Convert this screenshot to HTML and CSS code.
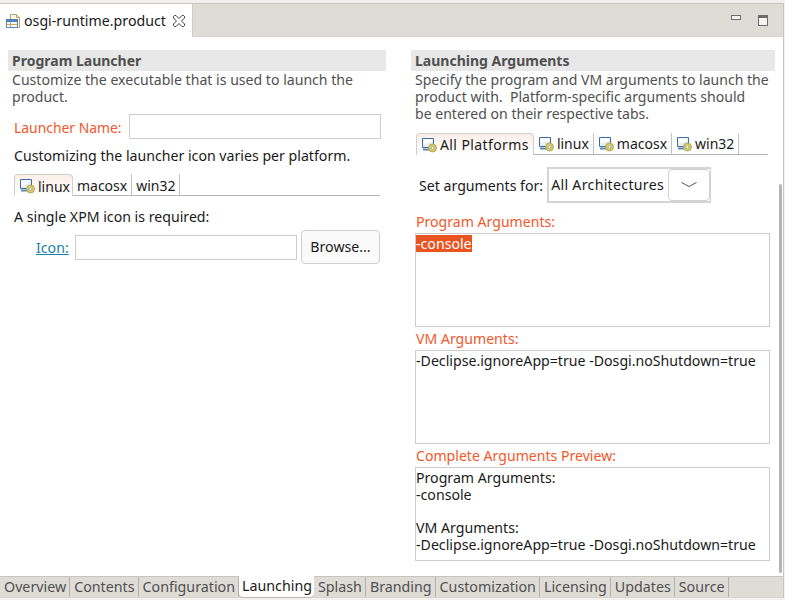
FILE: index.html
```html
<!DOCTYPE html>
<html lang="en">
<head>
<meta charset="utf-8">
<title>osgi-runtime.product</title>
<link rel="stylesheet" href="styles.css">
</head>
<body>
<div class="frame">
  <div class="editor-tabs">
    <div class="editor-tab">
      <svg class="file-icon" width="16" height="16" viewBox="0 0 16 16"><path d="M5.500 1.500h6l3 3v10h-9z" fill="#fbf6e6" stroke="#b9a670"/><path d="M11.500 1.500v3h3" fill="#efe3bd" stroke="#b9a670"/><path d="M1.500 6.500h11v8h-11z" fill="#f4f7fb" stroke="#5f86b5"/><path d="M1.500 6.500h11v2h-11z" fill="#5f8fc9" stroke="#4a76ad"/><path d="M2 11.500h10M5.500 9v5" stroke="#c9a65c" fill="none"/></svg>
      <span>osgi-runtime.product</span>
      <svg class="close-icon" width="12" height="12" viewBox="0 0 12 12"><path d="M.5 1.500l1-1h1.500L6 3.500 9 .5h1.500l1 1V3L8.500 6l3 3v1.500l-1 1H9L6 8.500l-3 3H1.500l-1-1V9l3-3-3-3z" fill="#fff" stroke="#3c3c3c"/></svg>
    </div>
    <div class="editor-tools">
      <span class="min-btn"></span>
      <span class="max-btn"></span>
    </div>
  </div>

  <div class="content">
    <section class="col col-left">
      <h2 class="sec-title">Program Launcher</h2>
      <p class="sec-desc">Customize the executable that is used to launch the product.</p>
      <div class="name-row">
        <label class="req name-label">Launcher Name:</label>
        <div class="field name-field"></div>
      </div>
      <p class="plain hint">Customizing the launcher icon varies per platform.</p>
      <div class="tabs tabs-left">
        <div class="tab on"><svg class="pc" width="16" height="16" viewBox="0 0 16 16"><use href="#pc"/></svg><span>linux</span></div>
        <div class="tab"><span>macosx</span></div>
        <div class="tab"><span>win32</span></div>
      </div>
      <p class="plain xpm">A single XPM icon is required:</p>
      <div class="icon-row">
        <a class="link">Icon:</a>
        <div class="field icon-field"></div>
        <div class="btn">Browse...</div>
      </div>
    </section>

    <section class="col col-right">
      <h2 class="sec-title">Launching Arguments</h2>
      <p class="sec-desc desc-narrow">Specify the program and VM arguments to launch the product with.&nbsp; Platform-specific arguments should be&nbsp;entered on their respective tabs.</p>
      <div class="tabs tabs-right">
        <div class="tab on"><svg class="pc" width="16" height="16" viewBox="0 0 16 16"><use href="#pc"/></svg><span class="wide">All Platforms</span></div>
        <div class="tab"><svg class="pc" width="16" height="16" viewBox="0 0 16 16"><use href="#pc"/></svg><span>linux</span></div>
        <div class="tab"><svg class="pc" width="16" height="16" viewBox="0 0 16 16"><use href="#pc"/></svg><span>macosx</span></div>
        <div class="tab"><svg class="pc" width="16" height="16" viewBox="0 0 16 16"><use href="#pc"/></svg><span>win32</span></div>
      </div>
      <div class="arch-row">
        <span class="plain">Set arguments for:</span>
        <div class="combo">
          <span class="combo-text">All Architectures</span>
          <span class="combo-btn"><svg width="18" height="6" viewBox="0 0 18 6"><path d="M1.500.5 9 4.500 16.500.5" fill="none" stroke="#555"/></svg></span>
        </div>
      </div>
      <label class="req arg-label first">Program Arguments:</label>
      <div class="area"><span class="sel">-console</span></div>
      <label class="req arg-label">VM Arguments:</label>
      <div class="area">-Declipse.ignoreApp=true -Dosgi.noShutdown=true</div>
      <label class="req arg-label">Complete Arguments Preview:</label>
      <div class="area preview">Program Arguments:<br>-console<br><br>VM Arguments:<br>-Declipse.ignoreApp=true -Dosgi.noShutdown=true</div>
    </section>
    <div class="scrollbar"></div>
  </div>

  <div class="page-tabs">
    <div class="page-tab">Overview</div>
    <div class="page-tab">Contents</div>
    <div class="page-tab">Configuration</div>
    <div class="page-tab on">Launching</div>
    <div class="page-tab">Splash</div>
    <div class="page-tab">Branding</div>
    <div class="page-tab">Customization</div>
    <div class="page-tab">Licensing</div>
    <div class="page-tab">Updates</div>
    <div class="page-tab">Source</div>
  </div>
</div>
<svg class="defs" width="0" height="0">
  <symbol id="pc" viewBox="0 0 16 16">
    <path d="M1.500 1.500h11v9h-11z" fill="#e6eef7" stroke="#3f6ea3"/>
    <path d="M2.500 2.500h9v2l-9 3z" fill="#fff"/>
    <path d="M2 12.500h10" stroke="#5f86b5" stroke-width="2"/>
    <circle cx="11.500" cy="11" r="4" fill="#d9cc62" stroke="#a79c4e" stroke-width=".8"/>
    <circle cx="11.500" cy="11" r="1.400" fill="#fff" stroke="#6f8fae" stroke-width=".6"/>
  </symbol>
</svg>
</body>
</html>
```
FILE: styles.css
```css
* { box-sizing: border-box; }
html, body { margin: 0; padding: 0; }
body {
  width: 785px;
  height: 600px;
  overflow: hidden;
  background: #f2f1f0;
  font-family: "Noto Sans", "Open Sans", sans-serif;
  font-size: 14.15px;
  line-height: 17px;
  color: #1a1a1a;
}
.defs { position: absolute; }
p, h2 { margin: 0; }
.frame {
  width: 784px;
  height: 595px;
  margin-top: 3px;
  border-top: 1px solid #c8c5bf;
  border-right: 1px solid #c8c5bf;
  display: flex;
  flex-direction: column;
  background: #fff;
}
.editor-tabs {
  height: 33px;
  flex: none;
  display: flex;
  justify-content: space-between;
  background: #dfdbd7;
  border-bottom: 1px solid #d8d5d0;
}
.editor-tab {
  width: 193px;
  background: #fff;
  border-right: 1px solid #cfccc6;
  margin-bottom: -1px;
  display: flex;
  align-items: center;
  padding-left: 5px;
  gap: 3px;
  font-size: 14.2px;
  white-space: nowrap;
}
.close-icon { margin-left: 4px; }
.editor-tools { display: flex; align-items: flex-start; padding: 11px 15px 0 0; gap: 17px; }
.min-btn { width: 10px; height: 5px; background: #f4f3f1; border: 1px solid #6b6b6b; }
.max-btn { width: 10px; height: 11px; background: #f7f6f4; border: 1px solid #6b6b6b; border-top-width: 3px; }

.content {
  flex: 1;
  display: flex;
  position: relative;
  padding-top: 13px;
  overflow: hidden;
}
.col { flex: none; display: flex; flex-direction: column; }
.col-left { width: 378px; margin-left: 8px; }
.col-right { width: 364px; margin-left: 25px; }
.sec-title {
  height: 21px;
  padding-left: 4px;
  background: #e8e8e8;
  font-size: 14px;
  font-weight: 700;
  line-height: 21px;
  color: #505050;
}
.sec-desc { padding: 0 4px; color: #505050; font-size: 14.1px; line-height: 17px; }
.desc-narrow { padding-right: 0; width: 360px; font-size: 14.05px; }
.req { color: #f2582a; font-size: 14.1px; }
.name-label { font-size: 13.9px; padding-top: 1px; }
.plain { color: #1a1a1a; }

.name-row { display: flex; align-items: center; margin: 9px 5px 0 6px; }
.name-row .req { width: 115px; }
.field { height: 25px; background: #fff; border: 1px solid #cdcdcd; }
.name-field { width: 252px; }
.hint { margin: 8px 0 0 6px; }
.tabs {
  display: flex;
  height: 22px;
  border-bottom: 1px solid #b5b5b5;
}
.tabs-left { margin: 10px 6px 0 6px; }
.tab {
  display: flex;
  align-items: center;
  padding: 0 4px;
  gap: 3px;
  font-size: 14px;
  border-right: 1px solid #c2c2c2;
  white-space: nowrap;
}
.tabs-left .tab span { padding-top: 2px; }
.wide { letter-spacing: .4px; }
.tab.on {
  background: linear-gradient(#fbeee8, #fff);
  border: 1px solid #cfcfcf;
  border-bottom: 0;
  border-radius: 4px 4px 0 0;
  margin-bottom: -1px;
}
.tabs-left .tab.on { padding-right: 2px; }
.xpm { margin: 12px 0 0 6px; }
.icon-row { display: flex; align-items: center; margin: 5px 6px 0 28px; }
.link { width: 39px; color: #1a7fa8; text-decoration: underline; }
.icon-field { width: 222px; }
.btn {
  width: 79px;
  height: 34px;
  margin-left: 4px;
  border: 1px solid #cfcfcf;
  border-radius: 4px;
  background: #fafafa;
  text-align: center;
  line-height: 31px;
}

.tabs-right { margin: 11px 7px 0 5px; }
.arch-row { display: flex; align-items: center; margin: 12px 0 0 8px; gap: 4px; }
.combo {
  display: flex;
  align-items: stretch;
  width: 164px;
  height: 36px;
  background: #fff;
  border: 2px solid #d4d4d4;
  border-right-width: 1px;
}
.combo-text { flex: 1; padding-left: 2px; line-height: 32px; letter-spacing: .3px; white-space: nowrap; }
.combo-btn {
  width: 42px;
  border: 1px solid #d0d0d0;
  border-radius: 4px;
  display: flex;
  align-items: center;
  justify-content: center;
}
.arg-label { display: block; margin: 2px 0 0 5px; line-height: 20px; height: 21px; }
.arg-label.first { margin-top: 9px; }
.area {
  width: 355px;
  height: 94px;
  margin-left: 4px;
  padding-top: 1px;
  border: 1px solid #cdcdcd;
  background: #fff;
  white-space: nowrap;
}
.preview { padding-top: 2px; line-height: 16.75px; }
.sel { background: #e95420; color: #fff; display: inline-block; }
.scrollbar {
  position: absolute;
  right: 1px;
  top: 147px;
  bottom: 3px;
  width: 3px;
  border-radius: 2px;
  background: #b5b5b5;
}

.page-tabs {
  flex: none;
  height: 22px;
  display: flex;
  background: #dfdbd7;
  border-top: 1px solid #c8c5bf;
  border-bottom: 1px solid #d8d5d0;
}
.page-tab {
  padding: 0 3px 0 4px;
  font-size: 14.25px;
  line-height: 20px;
  color: #505050;
  border-right: 1px solid #b5b2ad;
  white-space: nowrap;
}
.page-tab.on {
  padding: 0 2px 0 3px;
  background: #fff;
  color: #1a1a1a;
  border-right: 0;
  border-radius: 0 0 4px 4px;
  margin-top: -1px;
  box-shadow: 0 1px 0 #bdbab5;
}
```
